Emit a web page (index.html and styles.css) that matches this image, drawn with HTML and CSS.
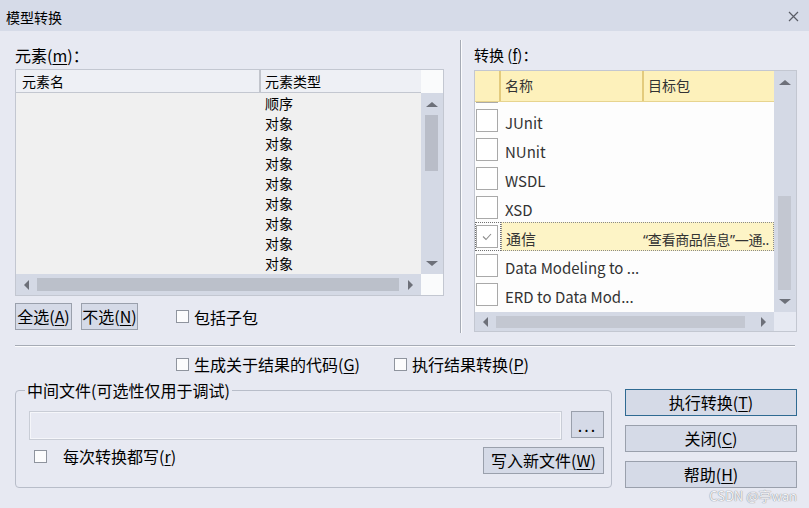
FILE: index.html
```html
<!DOCTYPE html>
<html lang="zh-CN">
<head>
    <meta charset="UTF-8">
    <title>模型转换</title>
    <link rel="stylesheet" href="styles.css">
</head>
<body>
<div class="dialog">
    <div class="titlebar">
        <span>模型转换</span>
        <svg class="close" width="11" height="11" viewBox="0 0 11 11"><path d="M1 1 L10 10 M10 1 L1 10" stroke="#5a5d66" stroke-width="1.2"/></svg>
    </div>

    <div class="content">
        <div class="top">
            <div class="left-pane">
                <div class="label">元素(<u>m</u>)：</div>
                <div class="listbox lb-left">
                    <div class="lb-head">
                        <div class="lh-name">元素名</div>
                        <div class="lh-type">元素类型</div>
                    </div>
                    <div class="lb-corner-top"></div>
                    <div class="lb-body">
                        <div class="lrow">顺序</div>
                        <div class="lrow">对象</div>
                        <div class="lrow">对象</div>
                        <div class="lrow">对象</div>
                        <div class="lrow">对象</div>
                        <div class="lrow">对象</div>
                        <div class="lrow">对象</div>
                        <div class="lrow">对象</div>
                        <div class="lrow">对象</div>
                    </div>
                    <div class="vscroll vs-left">
                        <div class="sb-btn"><span class="arr-up"></span></div>
                        <div class="vthumb"></div>
                        <div class="sb-fill"></div>
                        <div class="sb-btn"><span class="arr-down"></span></div>
                    </div>
                    <div class="hscroll hs-left">
                        <div class="sb-btn-h"><span class="arr-left"></span></div>
                        <div class="hthumb"></div>
                        <div class="sb-btn-h"><span class="arr-right"></span></div>
                    </div>
                    <div class="lb-corner"></div>
                </div>
                <div class="btn-row">
                    <button class="btn btn-small">全选(<u>A</u>)</button>
                    <button class="btn btn-small">不选(<u>N</u>)</button>
                    <label class="check sub-check"><span class="cb"></span>包括子包</label>
                </div>
            </div>

            <div class="vsep"></div>

            <div class="right-pane">
                <div class="label label-r">转换 (<u>f</u>)：</div>
                <div class="listbox lb-right">
                    <div class="th">
                        <div class="th-chk"></div>
                        <div class="th-name">名称</div>
                        <div class="th-target">目标包</div>
                    </div>
                    <div class="vscroll vs-right">
                        <div class="sb-btn"><span class="arr-up"></span></div>
                        <div class="sb-fill"></div>
                        <div class="vthumb"></div>
                        <div class="sb-btn"><span class="arr-down"></span></div>
                    </div>
                    <div class="tb-body">
                        <div class="trows">
                            <div class="trow"><div class="tchk"><span class="tbox"></span></div></div>
                            <div class="trow"><div class="tchk"><span class="tbox"></span></div><div class="tname">JUnit</div></div>
                            <div class="trow"><div class="tchk"><span class="tbox"></span></div><div class="tname">NUnit</div></div>
                            <div class="trow"><div class="tchk"><span class="tbox"></span></div><div class="tname">WSDL</div></div>
                            <div class="trow"><div class="tchk"><span class="tbox"></span></div><div class="tname">XSD</div></div>
                            <div class="trow sel">
                                <div class="tchk"><span class="tbox"><svg width="20" height="21" viewBox="0 0 20 21"><path d="M6 10.5 L9 13.5 L14 8" fill="none" stroke="#8c8c8c" stroke-width="1.1"/></svg></span></div>
                                <div class="tcells">
                                    <div class="tname">通信</div>
                                    <div class="ttarget"><span class="latin">“</span>查看商品信息<span class="latin">”—</span>通<span class="latin">..</span></div>
                                </div>
                            </div>
                            <div class="trow"><div class="tchk"><span class="tbox"></span></div><div class="tname">Data Modeling to ...</div></div>
                            <div class="trow"><div class="tchk"><span class="tbox"></span></div><div class="tname">ERD to Data Mod...</div></div>
                        </div>
                    </div>
                    <div class="hscroll hs-right">
                        <div class="sb-btn-h"><span class="arr-left"></span></div>
                        <div class="hthumb"></div>
                        <div class="sb-btn-h"><span class="arr-right"></span></div>
                    </div>
                    <div class="tb-corner"></div>
                </div>
            </div>
        </div>

        <div class="hsep"></div>

        <div class="options">
            <label class="check opt-first"><span class="cb"></span>生成关于结果的代码(<u>G</u>)</label>
            <label class="check"><span class="cb"></span>执行结果转换(<u>P</u>)</label>
        </div>

        <div class="bottom">
            <fieldset class="group">
                <legend>中间文件(可选性仅用于调试)</legend>
                <div class="group-inner">
                    <div class="file-row">
                        <div class="file-input"></div>
                        <button class="btn btn-dots">...</button>
                    </div>
                    <div class="write-row">
                        <label class="check every-check"><span class="cb"></span>每次转换都写(<u>r</u>)</label>
                        <button class="btn btn-write">写入新文件(<u>W</u>)</button>
                    </div>
                </div>
            </fieldset>
            <div class="actions">
                <button class="btn btn-action btn-default">执行转换(<u>T</u>)</button>
                <button class="btn btn-action">关闭(<u>C</u>)</button>
                <button class="btn btn-action">帮助(<u>H</u>)</button>
            </div>
        </div>
    </div>

    <div class="watermark">CSDN @亭wan</div>
</div>
</body>
</html>
```

FILE: styles.css
```css
body {
    margin: 0;
    font-family: "Noto Sans CJK SC", "Noto Sans", sans-serif;
    color: #000;
    background-color: #e7e9f2;
}
.dialog {
    position: relative;
    width: 809px;
    height: 508px;
    overflow: hidden;
    background-color: #e7e9f2;
}
.titlebar {
    height: 31px;
    background-color: #d6dbe8;
    display: flex;
    align-items: center;
    justify-content: space-between;
    padding: 2px 10px 0 6px;
    box-sizing: border-box;
    font-size: 14px;
}
.content {
    padding-left: 15px;
}
u {
    text-decoration: underline;
    text-underline-offset: 2px;
}
.latin {
    font-family: "Noto Sans", sans-serif;
}

/* top area */
.top {
    display: flex;
    margin-top: 9px;
    height: 293px;
}
.left-pane {
    width: 429px;
    padding-top: 5px;
}
.right-pane {
    width: 323px;
    padding-top: 5px;
}
.vsep {
    width: 0;
    margin-left: 16px;
    margin-right: 12px;
    border-left: 1px solid #a6abb5;
    border-right: 1px solid #fbfbfd;
}
.label {
    font-size: 16px;
    line-height: 20px;
    height: 20px;
    margin-bottom: 4px;
}
.label-r {
    font-size: 15px;
    margin-bottom: 5px;
}

/* list boxes */
.listbox {
    display: grid;
    box-sizing: border-box;
    border: 1px solid #c3c7d1;
}
.lb-left {
    width: 429px;
    height: 227px;
    grid-template-columns: 405px 22px;
    grid-template-rows: 23px 181px 21px;
    font-size: 14px;
}
.lb-head {
    display: flex;
    background-color: #eef0f5;
    border-bottom: 1px solid #c3c7d0;
    line-height: 22px;
}
.lh-name {
    width: 237px;
    padding-left: 6px;
    border-right: 2px solid #c2c5cc;
}
.lh-type {
    padding-left: 4px;
}
.lb-corner-top {
    background-color: #fafbfc;
}
.lb-body {
    background-color: #f0f0f0;
}
.lrow {
    height: 20px;
    line-height: 20px;
    padding-left: 249px;
}
.lb-corner {
    background-color: #fafbfc;
}

/* scrollbars */
.vscroll {
    display: flex;
    flex-direction: column;
    background-color: #d4d9e5;
}
.sb-btn {
    height: 22px;
    display: flex;
    align-items: center;
    justify-content: center;
    flex-shrink: 0;
}
.sb-fill {
    flex: 1;
}
.vthumb {
    width: 13px;
    margin-left: 4px;
    background-color: #b9bdc8;
}
.vs-left .vthumb {
    height: 56px;
}
.vs-right {
    grid-row: 1 / 3;
    grid-column: 2;
}
.vs-right .vthumb {
    height: 94px;
    background-color: #c3c7d1;
}
.hscroll {
    display: flex;
    align-items: center;
    background-color: #d4d9e5;
}
.sb-btn-h {
    width: 21px;
    height: 100%;
    display: flex;
    align-items: center;
    justify-content: center;
    flex-shrink: 0;
}
.hthumb {
    flex: 1;
    height: 13px;
    background-color: #bbc0ca;
    margin-right: 1px;
}
.hs-right .hthumb {
    flex: none;
    width: 249px;
    height: 12px;
    margin-right: 8px;
    background-color: #c3c7d1;
}
.arr-up, .arr-down, .arr-left, .arr-right {
    width: 0;
    height: 0;
    border: 5px solid transparent;
}
.arr-up {
    border-top: 0;
    border-bottom: 5px solid #6d7079;
    border-left-width: 6px;
    border-right-width: 6px;
}
.arr-down {
    border-bottom: 0;
    border-top: 5px solid #6d7079;
    border-left-width: 6px;
    border-right-width: 6px;
}
.arr-left {
    border-left: 0;
    border-right: 5px solid #6d7079;
}
.arr-right {
    border-right: 0;
    border-left: 5px solid #6d7079;
}

/* transform table */
.lb-right {
    width: 323px;
    height: 262px;
    grid-template-columns: 299px 22px;
    grid-template-rows: 31px 210px 19px;
    font-size: 14px;
    color: #333;
    background-color: #fdfdfd;
}
.th {
    display: flex;
    background-color: #fdf1bb;
    border-bottom: 1px solid #e7d48f;
    line-height: 29px;
}
.th-chk {
    width: 24px;
    border-right: 2px solid #e3cb7d;
}
.th-name {
    width: 137px;
    padding-left: 4px;
    border-right: 2px solid #e3cb7d;
}
.th-target {
    padding-left: 4px;
}
.tb-body {
    overflow: hidden;
}
.trows {
    margin-top: -25px;
}
.trow {
    display: flex;
    height: 29px;
    align-items: center;
    font-size: 15px;
}
.tchk {
    width: 26px;
    height: 100%;
    box-sizing: border-box;
    padding-left: 1px;
    display: flex;
    align-items: center;
}
.tbox {
    display: block;
    width: 22px;
    height: 23px;
    box-sizing: border-box;
    border: 1px solid #a9a9a9;
    background-color: #fff;
}
.tbox svg {
    display: block;
}
.tname {
    padding-left: 4px;
    padding-top: 4px;
    white-space: nowrap;
}
.sel .tchk {
    border: 1px dotted #707070;
    padding-left: 0;
}
.tcells {
    flex: 1;
    height: 100%;
    display: flex;
    align-items: center;
    background-color: #fdf4c6;
    border: 1px dotted #8a8a8a;
    box-sizing: border-box;
}
.tcells .tname {
    width: 141px;
    padding-left: 4px;
    box-sizing: border-box;
}
.ttarget {
    flex: 1;
    white-space: nowrap;
    overflow: hidden;
    font-size: 14px;
    padding-top: 4px;
    letter-spacing: -0.3px;
}
.tb-corner {
    background-color: #e6e9f2;
}

/* buttons and checks */
.btn {
    font-family: inherit;
    font-size: 16px;
    color: #000;
    background-color: #d5dae7;
    border: 1px solid #9aa0ac;
    padding: 0;
    margin: 0;
    height: 27px;
    line-height: 25px;
}
.btn-row {
    display: flex;
    align-items: center;
    margin-top: 7px;
    gap: 9px;
}
.btn-small {
    width: 57px;
}
.check {
    display: flex;
    align-items: center;
    font-size: 16px;
    line-height: 20px;
    white-space: nowrap;
}
.cb {
    width: 13px;
    height: 13px;
    box-sizing: border-box;
    border: 1px solid #8f949e;
    background-color: #fcfcfd;
    margin-right: 5px;
    flex-shrink: 0;
}
.sub-check {
    margin-left: 29px;
}

.hsep {
    width: 780px;
    margin-top: 12px;
    border-top: 1px solid #a6abb5;
    border-bottom: 1px solid #fbfbfd;
}
.options {
    display: flex;
    margin-top: 7px;
    height: 20px;
    padding-left: 161px;
}
.opt-first {
    width: 218px;
}

/* bottom area */
.bottom {
    display: flex;
    margin-top: 7px;
}
.group {
    width: 597px;
    box-sizing: border-box;
    margin: 0;
    padding: 0;
    border: 1px solid #b8bdc9;
    border-radius: 4px;
}
.group legend {
    font-size: 16px;
    line-height: 18px;
    padding: 0 2px;
    margin-left: 9px;
}
.group-inner {
    padding: 12px 7px 13px 13px;
}
.file-row {
    display: flex;
    gap: 9px;
    align-items: flex-start;
}
.file-input {
    width: 533px;
    height: 29px;
    box-sizing: border-box;
    border: 1px solid #c9cdd6;
    box-shadow: inset 0 0 0 1px #f5f6fa;
    background-color: #e7e9f2;
}
.btn-dots {
    width: 33px;
    letter-spacing: 2px;
    line-height: 20px;
}
.write-row {
    display: flex;
    justify-content: space-between;
    align-items: flex-start;
    margin-top: 7px;
}
.every-check {
    line-height: 18px;
    margin-left: 5px;
}
.every-check .cb {
    margin-right: 16px;
}
.btn-write {
    width: 121px;
}
.actions {
    display: flex;
    flex-direction: column;
    gap: 9px;
    width: 172px;
    margin-left: 13px;
    padding-top: 8px;
}
.btn-action {
    width: 172px;
}
.btn-default {
    border-color: #2f6a92;
}

.watermark {
    position: absolute;
    right: 12px;
    bottom: 5px;
    font-size: 13px;
    line-height: 15px;
    color: #f4f5f8;
    text-shadow: 0 0 1px #8a8d95, 0 0 1px #8a8d95;
}
```
